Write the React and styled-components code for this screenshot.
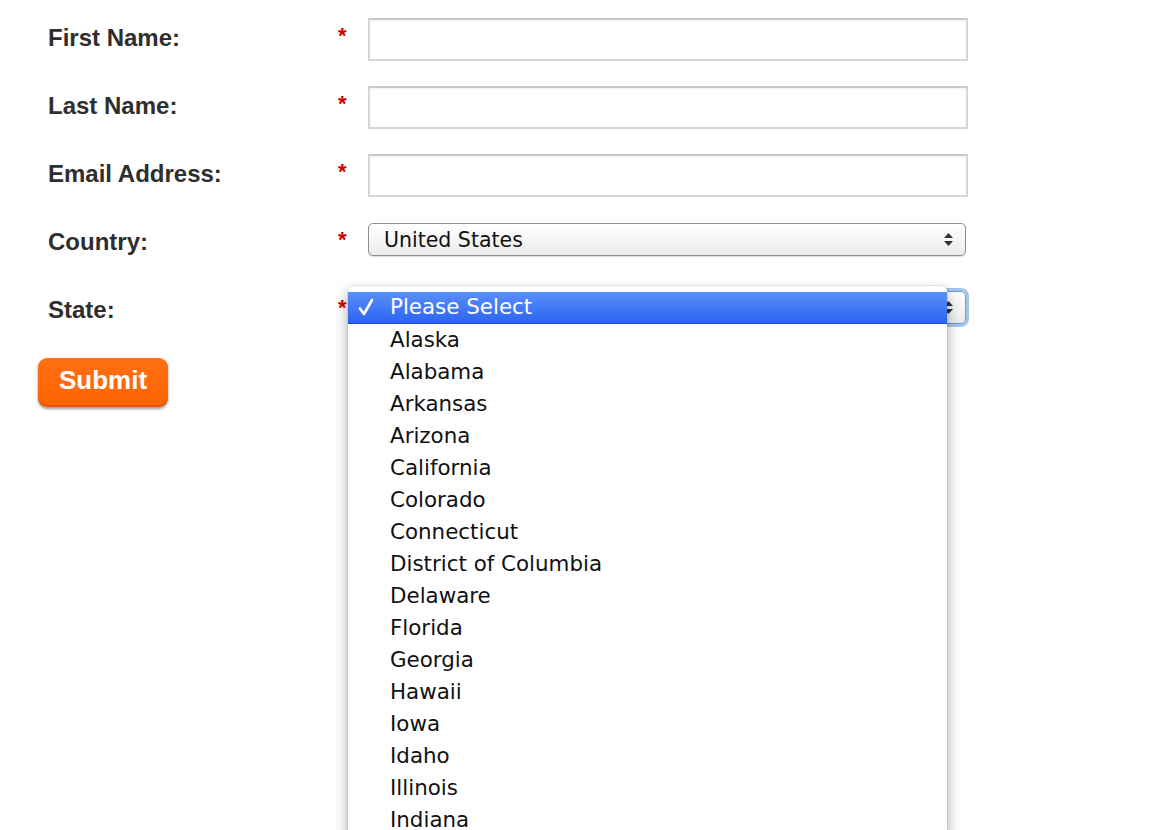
import React from "react";
import styled, { createGlobalStyle } from "styled-components";

const GlobalStyle = createGlobalStyle`
  html, body {
    margin: 0;
    padding: 0;
    background: #fff;
    overflow: hidden;
  }
  body {
    font-family: "Liberation Sans", Arial, sans-serif;
  }
`;

const states = [
  "Alaska",
  "Alabama",
  "Arkansas",
  "Arizona",
  "California",
  "Colorado",
  "Connecticut",
  "District of Columbia",
  "Delaware",
  "Florida",
  "Georgia",
  "Hawaii",
  "Iowa",
  "Idaho",
  "Illinois",
  "Indiana",
];

const Page = styled.div`
  height: 830px;
  padding-top: 18px;
  box-sizing: border-box;
`;

const Form = styled.form`
  display: flex;
  flex-direction: column;
  gap: 25px;
  padding-left: 48px;
`;

const Row = styled.div`
  display: grid;
  grid-template-columns: 290px 30px 600px;
  height: 43px;
  align-items: start;
`;

const Label = styled.label`
  font-size: 24px;
  font-weight: bold;
  color: #2e2e2e;
  line-height: 43px;
  margin-top: -2px;
`;

const Required = styled.span`
  color: #c00;
  font-size: 22px;
  font-weight: bold;
  line-height: 43px;
  margin-top: -4px;
`;

const TextInput = styled.input`
  box-sizing: border-box;
  width: 600px;
  height: 43px;
  border: 2px solid #d6d6d6;
  border-top-color: #c8c8c8;
  box-shadow: inset 0 1px 2px rgba(0, 0, 0, 0.06);
  background: #fff;
  padding: 0 12px;
  font-size: 20px;
  outline: none;
`;

const Field = styled.div`
  position: relative;
  margin-top: 1px;
`;

const SelectBox = styled.div`
  box-sizing: border-box;
  width: 598px;
  height: 33px;
  border: 1px solid ${(p) => (p.focused ? "#6f9ad6" : "#8e8e8e")};
  border-radius: 5px;
  background: linear-gradient(#ffffff, #ececec);
  box-shadow: ${(p) =>
    p.focused
      ? "0 0 0 3px rgba(95, 150, 225, 0.55)"
      : "0 1px 1px rgba(0, 0, 0, 0.15)"};
  display: flex;
  align-items: center;
  justify-content: space-between;
  padding: 0 12px 0 15px;
  font-family: "DejaVu Sans", sans-serif;
  font-size: 20.5px;
  color: #111;
`;

const Arrows = () => (
  <svg width="9" height="13" viewBox="0 0 9 13">
    <path d="M4.5 0 L9 5 H0 Z M0 8 H9 L4.5 13 Z" fill="#333" />
  </svg>
);

const CheckMark = () => (
  <svg width="16" height="18" viewBox="0 0 16 18">
    <path
      d="M2 10.5 L6 16 L14 2"
      fill="none"
      stroke="#fff"
      strokeWidth="2.6"
      strokeLinecap="round"
      strokeLinejoin="round"
    />
  </svg>
);

const Menu = styled.ul`
  position: absolute;
  left: -20px;
  top: -5px;
  width: 599px;
  margin: 0;
  padding: 6px 0 0;
  list-style: none;
  background: #fff;
  border-radius: 5px 5px 0 0;
  box-shadow: 0 0 0 1px rgba(0, 0, 0, 0.06), 0 6px 14px rgba(0, 0, 0, 0.35);
  font-family: "DejaVu Sans", sans-serif;
  font-size: 21.4px;
  z-index: 10;
`;

const Option = styled.li`
  box-sizing: border-box;
  display: flex;
  align-items: center;
  height: 32px;
  padding: 0 0 2px 42px;
  position: relative;
  color: ${(p) => (p.selected ? "#fff" : "#111")};
  background: ${(p) =>
    p.selected ? "linear-gradient(#5b8ff9, #2b64f2)" : "transparent"};
  border-bottom: ${(p) => (p.selected ? "1px solid #1a4fd8" : "none")};
`;

const Check = styled.span`
  position: absolute;
  left: 10px;
  top: 6px;
  display: flex;
`;

const SubmitButton = styled.button`
  margin-left: -10px;
  width: 130px;
  height: 49px;
  border: none;
  border-radius: 9px;
  background: linear-gradient(#ff7014, #ff6300);
  box-shadow: 0 2px 3px rgba(0, 0, 0, 0.4), inset 0 -2px 0 #e85400;
  color: #fff;
  font-family: "Liberation Sans", Arial, sans-serif;
  font-size: 26px;
  font-weight: bold;
  padding: 0 0 4px;
  cursor: pointer;
`;

const TextRow = ({ label }) => (
  <Row>
    <Label>{label}</Label>
    <Required>*</Required>
    <TextInput type="text" />
  </Row>
);

export default function App() {
  return (
    <Page>
      <GlobalStyle />
      <Form onSubmit={(e) => e.preventDefault()}>
        <TextRow label="First Name:" />
        <TextRow label="Last Name:" />
        <TextRow label="Email Address:" />
        <Row>
          <Label>Country:</Label>
          <Required>*</Required>
          <Field>
            <SelectBox>
              <span>United States</span>
              <Arrows />
            </SelectBox>
          </Field>
        </Row>
        <Row>
          <Label>State:</Label>
          <Required>*</Required>
          <Field>
            <SelectBox focused>
              <span />
              <Arrows />
            </SelectBox>
            <Menu>
              <Option selected>
                <Check>
                  <CheckMark />
                </Check>
                Please Select
              </Option>
              {states.map((s) => (
                <Option key={s}>{s}</Option>
              ))}
            </Menu>
          </Field>
        </Row>
        <div>
          <SubmitButton type="submit">Submit</SubmitButton>
        </div>
      </Form>
    </Page>
  );
}
